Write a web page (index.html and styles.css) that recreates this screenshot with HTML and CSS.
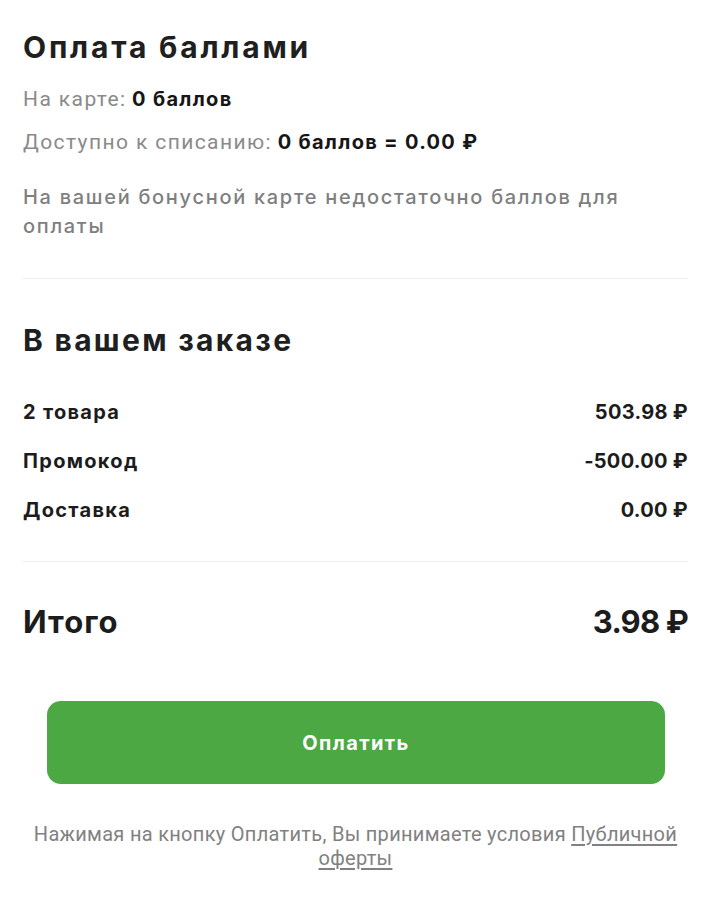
FILE: index.html
```html
<!DOCTYPE html>
<html lang="ru">
<head>
<meta charset="utf-8">
<title>Оплата баллами</title>
<link rel="stylesheet" href="styles.css">
</head>
<body>
<main class="page">
  <section class="points">
    <h1 class="heading heading-main">Оплата баллами</h1>
    <p class="info info-card"><span class="label">На карте:</span> <b class="value">0 баллов</b></p>
    <p class="info info-avail"><span class="label">Доступно к списанию:</span> <b class="value">0 баллов = 0.00 ₽</b></p>
    <p class="warning">На вашей бонусной карте недостаточно баллов для<br>оплаты</p>
  </section>
  <hr class="divider">
  <section class="order">
    <h2 class="heading heading-order">В вашем заказе</h2>
    <div class="rows">
      <div class="row"><span class="row-name">2 товара</span><span class="row-sum">503.98 ₽</span></div>
      <div class="row"><span class="row-name">Промокод</span><span class="row-sum">-500.00 ₽</span></div>
      <div class="row"><span class="row-name">Доставка</span><span class="row-sum">0.00 ₽</span></div>
    </div>
  </section>
  <hr class="divider divider-bottom">
  <div class="total"><span class="total-name">Итого</span><span class="total-sum">3.98 ₽</span></div>
  <div class="actions">
    <button class="pay" type="button">Оплатить</button>
  </div>
  <p class="terms">Нажимая на кнопку Оплатить, Вы принимаете условия <a class="terms-link" href="#">Публичной</a> <a class="terms-link" href="#">оферты</a></p>
</main>
</body>
</html>
```
FILE: styles.css
```css
* { box-sizing: border-box; }
html, body { margin: 0; padding: 0; background: #ffffff; }
body {
  font-family: "Inter", "Noto Sans", sans-serif;
  color: #1f1f1f;
}
.page {
  padding: 30px 24px 40px 23px;
  display: flex;
  flex-direction: column;
}
.heading {
  margin: 0;
  font-weight: 700;
  color: #1f1f1f;
  font-size: 30px;
  line-height: 34px;
  letter-spacing: 2.3px;
}
.heading-main { letter-spacing: 2.8px; }
.info {
  margin: 0;
  font-size: 20px;
  line-height: 24px;
}
.info-card { margin-top: 23px; }
.info-avail { margin-top: 19px; }
.label {
  font-family: "Roboto", sans-serif;
  font-weight: 400;
  font-size: 21px;
  letter-spacing: 1.4px;
  color: #8a8a8a;
}
.value {
  font-weight: 700;
  font-size: 20px;
  letter-spacing: 1.3px;
  color: #161616;
}
.warning {
  margin: 29px 0 0;
  font-size: 20px;
  line-height: 29px;
  font-weight: 500;
  color: #7f7f7f;
  letter-spacing: 1.7px;
}
.divider {
  margin: 37px 0 0;
  border: 0;
  height: 1px;
  background: #eeeeee;
}
.heading-order {
  margin-top: 44px;
}
.rows {
  margin-top: 43px;
  display: flex;
  flex-direction: column;
  gap: 25px;
}
.row {
  display: flex;
  justify-content: space-between;
  font-size: 20px;
  line-height: 24px;
  font-weight: 700;
  color: #1c1c1c;
}
.row-name { letter-spacing: 1.3px; }
.row-sum { letter-spacing: 0.3px; }
.divider-bottom { margin-top: 39px; }
.total {
  margin-top: 42px;
  display: flex;
  justify-content: space-between;
  font-size: 31px;
  line-height: 36px;
  font-weight: 700;
  color: #1c1c1c;
}
.total-name { letter-spacing: 1px; }
.total-sum { letter-spacing: -0.8px; }
.actions {
  margin-top: 61px;
  padding: 0 23px 0 24px;
}
.pay {
  display: block;
  width: 100%;
  height: 83px;
  border: 0;
  border-radius: 14px;
  background: #4ba843;
  color: #ffffff;
  font-family: "Inter", "Noto Sans", sans-serif;
  font-size: 20px;
  font-weight: 700;
  letter-spacing: 1.4px;
  cursor: pointer;
}
.terms {
  margin: 38px 0 0;
  text-align: center;
  font-family: "Roboto", sans-serif;
  font-size: 20px;
  line-height: 24px;
  letter-spacing: 0.3px;
  color: #818181;
}
.terms-link {
  color: #818181;
  text-decoration: underline;
  text-underline-offset: 3px;
}
```
